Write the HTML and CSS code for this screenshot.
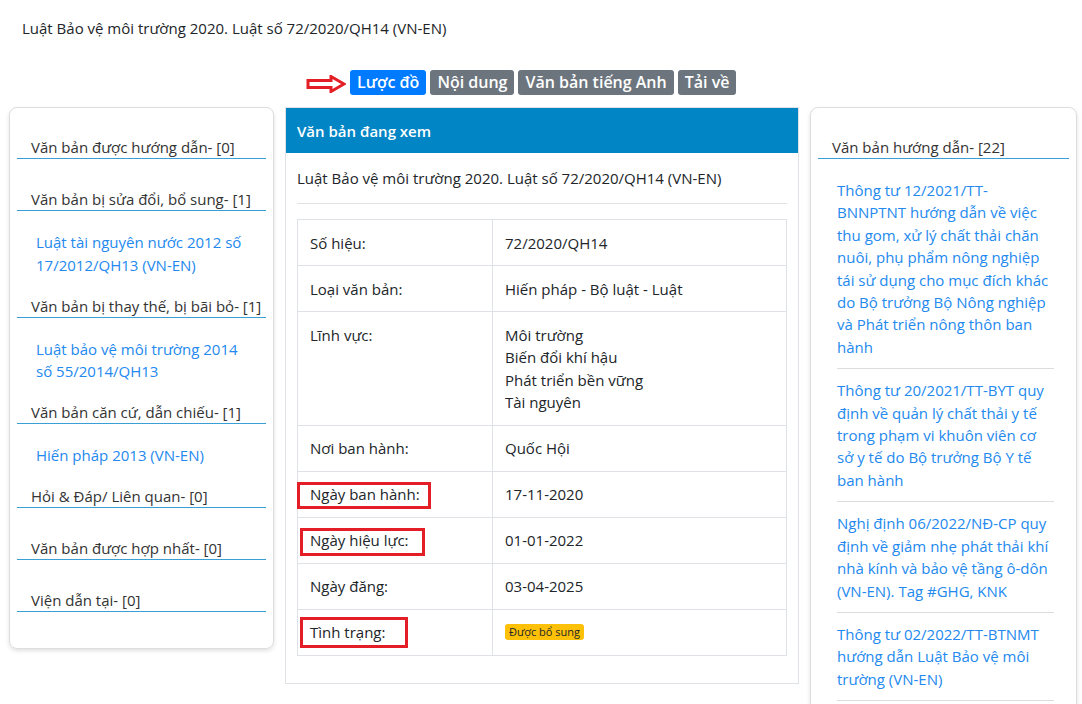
FILE: index.html
```html
<!DOCTYPE html>
<html lang="vi">
<head>
    <meta charset="UTF-8">
    <meta name="viewport" content="width=device-width, initial-scale=1.0">
    <title>Luật Bảo vệ môi trường 2020</title>
    <link rel="stylesheet" href="styles.css">
</head>
<body>
    <h1 class="page-title">Luật Bảo vệ môi trường 2020. Luật số 72/2020/QH14 (VN-EN)</h1>

    <div class="tabs">
        <svg class="arrow" width="40" height="18" viewBox="0 0 40 18">
            <path d="M2 5.5 H25 V1.5 L38 9 L25 16.5 V12.5 H2 Z" fill="#fff" stroke="#e41e26" stroke-width="3" stroke-linejoin="miter"/>
        </svg>
        <a class="tab active" href="#">Lược đồ</a>
        <a class="tab" href="#">Nội dung</a>
        <a class="tab" href="#">Văn bản tiếng Anh</a>
        <a class="tab" href="#">Tải về</a>
    </div>

    <div class="layout">
        <div class="side-card left">
            <div class="section">
                <div class="section-title">Văn bản được hướng dẫn- [0]</div>
                <ul class="links"></ul>
            </div>
            <div class="section">
                <div class="section-title">Văn bản bị sửa đổi, bổ sung- [1]</div>
                <ul class="links">
                    <li><a href="#">Luật tài nguyên nước 2012 số 17/2012/QH13 (VN-EN)</a></li>
                </ul>
            </div>
            <div class="section">
                <div class="section-title">Văn bản bị thay thế, bị bãi bỏ- [1]</div>
                <ul class="links">
                    <li><a href="#">Luật bảo vệ môi trường 2014 số 55/2014/QH13</a></li>
                </ul>
            </div>
            <div class="section">
                <div class="section-title">Văn bản căn cứ, dẫn chiếu- [1]</div>
                <ul class="links">
                    <li><a href="#">Hiến pháp 2013 (VN-EN)</a></li>
                </ul>
            </div>
            <div class="section">
                <div class="section-title">Hỏi &amp; Đáp/ Liên quan- [0]</div>
                <ul class="links"></ul>
            </div>
            <div class="section">
                <div class="section-title">Văn bản được hợp nhất- [0]</div>
                <ul class="links"></ul>
            </div>
            <div class="section">
                <div class="section-title">Viện dẫn tại- [0]</div>
                <ul class="links"></ul>
            </div>
        </div>

        <div class="doc-panel">
            <div class="doc-header">Văn bản đang xem</div>
            <div class="doc-body">
                <p class="doc-name">Luật Bảo vệ môi trường 2020. Luật số 72/2020/QH14 (VN-EN)</p>
                <hr>
                <table class="info">
                    <tr><td>Số hiệu:</td><td>72/2020/QH14</td></tr>
                    <tr><td>Loại văn bản:</td><td>Hiến pháp - Bộ luật - Luật</td></tr>
                    <tr><td>Lĩnh vực:</td><td>Môi trường<br>Biến đổi khí hậu<br>Phát triển bền vững<br>Tài nguyên</td></tr>
                    <tr><td>Nơi ban hành:</td><td>Quốc Hội</td></tr>
                    <tr><td><span class="mark mark-1">Ngày ban hành:</span></td><td>17-11-2020</td></tr>
                    <tr><td><span class="mark mark-2">Ngày hiệu lực:</span></td><td>01-01-2022</td></tr>
                    <tr><td>Ngày đăng:</td><td>03-04-2025</td></tr>
                    <tr><td><span class="mark mark-3">Tình trạng:</span></td><td><span class="badge">Được bổ sung</span></td></tr>
                </table>
            </div>
        </div>

        <div class="side-card right">
            <div class="section">
                <div class="section-title">Văn bản hướng dẫn- [22]</div>
                <ul class="guide-list">
                    <li><a href="#">Thông tư 12/2021/TT-BNNPTNT hướng dẫn về việc thu gom, xử lý chất thải chăn nuôi, phụ phẩm nông nghiệp tái sử dụng cho mục đích khác do Bộ trưởng Bộ Nông nghiệp và Phát triển nông thôn ban hành</a></li>
                    <li><a href="#">Thông tư 20/2021/TT-BYT quy định về quản lý chất thải y tế trong phạm vi khuôn viên cơ sở y tế do Bộ trưởng Bộ Y tế ban hành</a></li>
                    <li><a href="#">Nghị định 06/2022/NĐ-CP quy định về giảm nhẹ phát thải khí nhà kính và bảo vệ tầng ô-dôn (VN-EN). Tag #GHG, KNK</a></li>
                    <li><a href="#">Thông tư 02/2022/TT-BTNMT hướng dẫn Luật Bảo vệ môi trường (VN-EN)</a></li>
                </ul>
            </div>
        </div>
    </div>
</body>
</html>
```

FILE: styles.css
```css
body {
    font-family: 'Open Sans', 'Noto Sans', sans-serif;
    font-size: 15px;
    line-height: 1.5;
    color: #212529;
    background: #fff;
    margin: 0;
    padding: 0 5px 0 9px;
    overflow: hidden;
    height: 704px;
}
a {
    text-decoration: none;
}
.page-title {
    font-size: 15px;
    font-weight: 400;
    margin: 0;
    padding: 17px 0 0 13px;
    line-height: 22px;
}
.tabs {
    display: flex;
    align-items: center;
    gap: 4px;
    margin: 30px 0 0 297px;
    height: 26px;
}
.arrow {
    margin-right: 0;
    margin-top: 4px;
}
.tab {
    display: inline-block;
    background-color: #6c757d;
    color: #fff;
    font-size: 16px;
    font-weight: 600;
    line-height: 25px;
    padding: 0 7px;
    border-radius: 3px;
}
.tab.active {
    background-color: #007bff;
}
.layout {
    display: grid;
    grid-template-columns: 265px 514px 267px;
    gap: 11px;
    align-items: start;
    margin-top: 12px;
}
.side-card {
    border: 1px solid #ddd;
    border-radius: 8px;
    box-shadow: 0 2px 4px rgba(0, 0, 0, 0.12);
    padding: 18px 7px 17px;
}
.section-title {
    color: #333;
    margin-top: 10px;
    padding-left: 14px;
    line-height: 22px;
    border-bottom: 1px solid #3a9fd6;
}
.links {
    list-style: none;
    margin: 0;
    padding: 12px 20px 7px 19px;
}
.links li {
    padding: 8px 0 1.5px;
}
.links a {
    color: #2389ee;
    line-height: 22.5px;
}
.guide-list {
    list-style: none;
    margin: 0;
    padding: 10px 15px 0 19px;
}
.guide-list li {
    padding: 10px 0 10px;
    border-bottom: 1px solid #ddd;
    line-height: 22.4px;
}
.guide-list a {
    color: #2389ee;
}
.doc-panel {
    border: 1px solid #dee2e6;
}
.doc-header {
    background-color: #0185c5;
    color: #fff;
    font-weight: 600;
    line-height: 22px;
    padding: 12px 11px 11px;
}
.doc-body {
    padding: 14px 11px 27px;
}
.doc-name {
    margin: 0;
    line-height: 22px;
}
hr {
    border: 0;
    border-top: 1px solid #e2e2e2;
    margin: 14px 0 15px;
}
.info {
    width: 100%;
    border-collapse: collapse;
}
.info td {
    border: 1px solid #dee2e6;
    padding: 11.5px 12px 11px;
    vertical-align: top;
    line-height: 22.5px;
}
.info td:first-child {
    width: 170px;
}
.mark {
    position: relative;
}
.mark::after {
    content: "";
    position: absolute;
    border: 3px solid #e41e26;
}
.mark-1::after {
    left: -13px;
    top: -2px;
    right: -11px;
    bottom: -5px;
}
.mark-2::after {
    left: -10px;
    top: -2px;
    right: -16px;
    bottom: -6px;
}
.mark-3::after {
    left: -10px;
    top: -5px;
    right: -23px;
    bottom: -6px;
}
.badge {
    display: inline-block;
    background-color: #ffc107;
    color: #212529;
    font-size: 11px;
    line-height: 16px;
    padding: 0 4px;
    border-radius: 3px;
    vertical-align: 2px;
}
```
